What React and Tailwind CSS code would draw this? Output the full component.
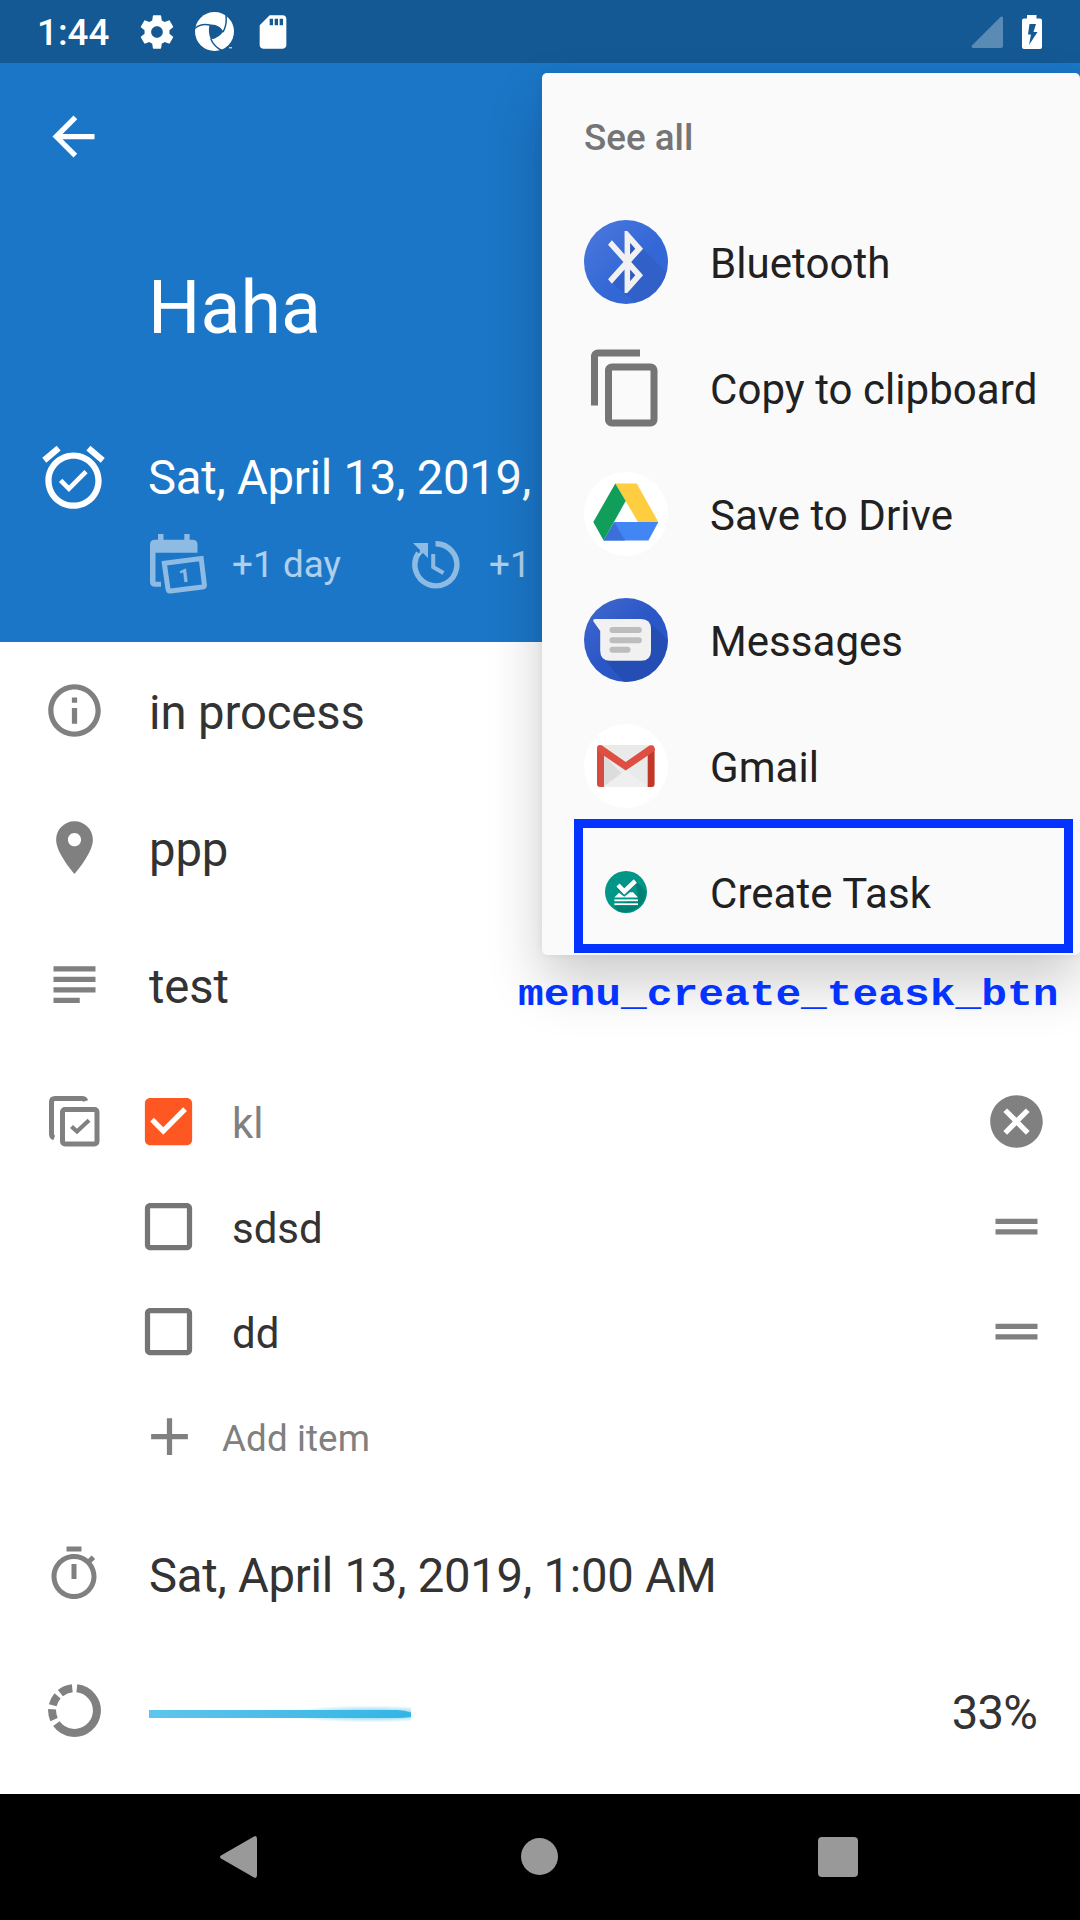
function Icon({ d, className }) {
  return (
    <svg viewBox="0 0 24 24" fill="currentColor" className={`shrink-0 ${className}`}>
      <path d={d} />
    </svg>
  );
}

const P = {
  back: "M20 11H7.83l5.59-5.59L12 4l-8 8 8 8 1.41-1.41L7.83 13H20v-2z",
  alarm:
    "M22 5.72l-4.6-3.86-1.29 1.53 4.6 3.86L22 5.72zM7.88 3.39L6.6 1.86 2 5.71l1.29 1.53 4.59-3.85zM12 4c-4.97 0-9 4.03-9 9s4.02 9 9 9c4.97 0 9-4.03 9-9s-4.03-9-9-9zm0 16c-3.87 0-7-3.13-7-7s3.13-7 7-7 7 3.13 7 7-3.13 7-7 7zm-1.46-5.47L8.41 12.4l-1.06 1.06 3.18 3.18 6-6-1.06-1.06-4.93 4.95z",
  gear: "M19.43 12.98c.04-.32.07-.64.07-.98s-.03-.66-.07-.98l2.11-1.65c.19-.15.24-.42.12-.64l-2-3.46c-.12-.22-.39-.3-.61-.22l-2.49 1c-.52-.4-1.08-.73-1.69-.98l-.38-2.65C14.46 2.18 14.25 2 14 2h-4c-.25 0-.46.18-.49.42l-.38 2.65c-.61.25-1.17.59-1.69.98l-2.49-1c-.23-.09-.49 0-.61.22l-2 3.46c-.13.22-.07.49.12.64l2.11 1.65c-.04.32-.07.65-.07.98s.03.66.07.98l-2.11 1.65c-.19.15-.24.42-.12.64l2 3.46c.12.22.39.3.61.22l2.49-1c.52.4 1.08.73 1.69.98l.38 2.65c.03.24.24.42.49.42h4c.25 0 .46-.18.49-.42l.38-2.65c.61-.25 1.17-.59 1.69-.98l2.49 1c.23.09.49 0 .61-.22l2-3.46c.12-.22.07-.49-.12-.64l-2.11-1.65zM12 15.5c-1.93 0-3.5-1.57-3.5-3.5s1.57-3.5 3.5-3.5 3.5 1.57 3.5 3.5-1.57 3.5-3.5 3.5z",
  sd: "M18 2h-8L4.02 8 4 20c0 1.1.9 2 2 2h12c1.1 0 2-.9 2-2V4c0-1.1-.9-2-2-2zm-6 6h-2V4h2v4zm3 0h-2V4h2v4zm3 0h-2V4h2v4z",
  info: "M11 7h2v2h-2zm0 4h2v6h-2zm1-9C6.48 2 2 6.48 2 12s4.48 10 10 10 10-4.48 10-10S17.52 2 12 2zm0 18c-4.41 0-8-3.59-8-8s3.59-8 8-8 8 3.59 8 8-3.59 8-8 8z",
  place:
    "M12 2C8.13 2 5 5.13 5 9c0 5.25 7 13 7 13s7-7.75 7-13c0-3.87-3.13-7-7-7zm0 9.5c-1.38 0-2.5-1.12-2.5-2.5s1.12-2.5 2.5-2.5 2.5 1.12 2.5 2.5-1.12 2.5-2.5 2.5z",
  subject: "M14 17H4v2h10v-2zm6-8H4v2h16V9zM4 15h16v-2H4v2zM4 5v2h16V5H4z",
  checked:
    "M19 3H5c-1.11 0-2 .9-2 2v14c0 1.1.89 2 2 2h14c1.11 0 2-.9 2-2V5c0-1.1-.89-2-2-2zm-9 14l-5-5 1.41-1.41L10 14.17l7.59-7.59L19 8l-9 9z",
  unchecked:
    "M19 5v14H5V5h14m0-2H5c-1.1 0-2 .9-2 2v14c0 1.1.9 2 2 2h14c1.1 0 2-.9 2-2V5c0-1.1-.9-2-2-2z",
  add: "M19 13h-6v6h-2v-6H5v-2h6V5h2v6h6v2z",
  cancel:
    "M12 2C6.47 2 2 6.47 2 12s4.47 10 10 10 10-4.47 10-10S17.53 2 12 2zm5 13.59L15.59 17 12 13.41 8.41 17 7 15.59 10.59 12 7 8.41 8.41 7 12 10.59 15.59 7 17 8.41 13.41 12 17 15.59z",
  drag: "M20 9H4v2h16V9zM4 15h16v-2H4v2z",
  timer:
    "M15 1H9v2h6V1zm-4 13h2V8h-2v6zm8.03-6.61l1.42-1.42c-.43-.51-.9-.99-1.41-1.41l-1.42 1.42C16.07 4.74 14.12 4 12 4c-4.97 0-9 4.03-9 9s4.02 9 9 9 9-4.03 9-9c0-2.12-.74-4.08-1.97-5.61zM12 20c-3.87 0-7-3.13-7-7s3.13-7 7-7 7 3.13 7 7-3.13 7-7 7z",
  copy: "M16 1H4c-1.1 0-2 .9-2 2v14h2V3h12V1zm3 4H8c-1.1 0-2 .9-2 2v14c0 1.1.9 2 2 2h11c1.1 0 2-.9 2-2V7c0-1.1-.9-2-2-2zm0 16H8V7h11v14z",
  bluetooth:
    "M17.71 7.71L12 2h-1v7.59L6.41 5 5 6.41 10.59 12 5 17.59 6.41 19 11 14.41V22h1l5.71-5.71-4.3-4.29 4.3-4.29zM13 5.83l1.88 1.88L13 9.59V5.83zm1.88 10.46L13 18.17v-3.76l1.88 1.88z",
};

function SwirlIcon() {
  return (
    <svg viewBox="0 0 39 39" className="ml-[18px] size-[39px] shrink-0">
      <circle cx="19.5" cy="19.5" r="19.5" fill="#fff" />
      <g stroke="#145994" fill="none" strokeWidth="1.5">
        <path d="M0 16.5C4 12.5 9 11.8 15 13" />
        <path d="M28 20C31 15 32 8 30.5 0" />
        <path d="M15.8 27C18 32 22 36.500 28 39" />
      </g>
      <path d="M31 0L39 0L39 12C37 8.500 34.500 6 32 4.500Z" fill="#145994" />
      <path
        d="M14.500 12.700C21 12 26 15 28.200 19.700C25 24 20 27 15.800 27.300C13.500 22 13.500 17 14.500 12.700Z"
        fill="#145994"
      />
      <path d="M34 35.800H37" stroke="#fff" />
    </svg>
  );
}

function StatusBar() {
  return (
    <div className="flex h-[63px] items-center bg-[#145994] pr-[38px] pl-[37px] text-white">
      <span className="w-[73px] pt-[4px] text-[36.75px] leading-none font-medium">1:44</span>
      <Icon d={P.gear} className="ml-[27px] size-10" />
      <SwirlIcon />
      <Icon d={P.sd} className="ml-[19px] size-10" />
      <svg viewBox="0 0 32 32" className="ml-auto size-8 shrink-0">
        <path d="M30 0.500Q32 0 32 2V30Q32 32 30 32H2Q0 31.500 1 29.500Z" fill="#fff" fillOpacity=".3" />
      </svg>
      <svg viewBox="0 0 20 34" className="ml-[19px] h-[34px] w-5 shrink-0">
        <path d="M5 0H14.500V3.500H18Q20 3.500 20 5.500V32Q20 34 18 34H2Q0 34 0 32V5.500Q0 3.500 2 3.500H5Z" fill="#fff" />
        <path d="M7.500 9H14L11.500 17H15.500L7 30L9 19.500H6Z" fill="#145994" />
      </svg>
    </div>
  );
}

function NextDayIcon() {
  return (
    <svg viewBox="0 0 58 60" className="h-[60px] w-[58px] shrink-0">
      <path
        d="M8 0H13.500V5.700H34.300V0H39.600V5.700H42.500Q47.500 5.700 47.500 10.700V18.700H5.500V47.700H11V52.700H5Q0 52.700 0 47.700V10.700Q0 5.700 5 5.700H8Z"
        fill="currentColor"
      />
      <path
        d="M14.300 29.300L51.200 24.500L54.400 51Q54.600 52.700 52.500 53L20.500 57Q18.300 57.200 18 55Z"
        fill="none"
        stroke="currentColor"
        strokeWidth="5"
      />
      <text
        x="34.500"
        y="48"
        textAnchor="middle"
        transform="rotate(-7 34.500 42)"
        className="fill-current font-['Roboto'] text-[19px] font-black"
      >
        1
      </text>
    </svg>
  );
}

function LaterIcon() {
  return (
    <svg viewBox="0 0 48 48" className="h-12 w-12 shrink-0">
      <path d="M23.500 2.800A21 21 0 1 1 6.500 12" fill="none" stroke="currentColor" strokeWidth="5.400" />
      <path d="M1 2H16V17L11 12L7 15L8 9Z" fill="currentColor" />
      <path d="M21.200 13V26L31.500 32" fill="none" stroke="currentColor" strokeWidth="4" />
    </svg>
  );
}

function Header() {
  return (
    <header className="flex h-[579px] flex-col bg-[#1b76c7] text-white">
      <div className="flex h-[147px] items-center pl-[42px]">
        <Icon d={P.back} className="size-[63px]" />
      </div>
      <h1 className="mt-[55px] pl-[148px] text-[73.5px] leading-[86px] font-normal">Haha</h1>
      <div className="mt-[75px] flex h-[100px] items-center pl-[36px]">
        <Icon d={P.alarm} className="mt-[2px] size-[75px]" />
        <span className="ml-[37px] pt-[5px] text-[47.25px] leading-none tracking-[-0.25px]">Sat, April 13, 2019,</span>
      </div>
      <div className="flex h-[76px] items-center pl-[150px] text-[36.75px] leading-none text-white/65">
        <span className="text-white/50">
          <NextDayIcon />
        </span>
        <span className="ml-[24px] pt-[3px] tracking-[0.1px]">+1 day</span>
        <span className="ml-[71px] pt-[2px] text-white/50">
          <LaterIcon />
        </span>
        <span className="ml-[29px] pt-[3px]">+1</span>
      </div>
    </header>
  );
}

function Row({ icon, children }) {
  return (
    <div className="flex h-[137px] items-center pl-[43px]">
      <div className="flex w-[63px] shrink-0 justify-center text-[#808080]">{icon}</div>
      <div className="ml-[43px] flex flex-1 items-center text-[47.25px] leading-none text-[#333]">{children}</div>
    </div>
  );
}

function ChecklistIcon() {
  return (
    <svg viewBox="0 0 51 51" fill="none" stroke="currentColor" strokeWidth="5" className="size-[51px]">
      <path d="M36.700 5Q36 2.500 33 2.500H6Q2.500 2.500 2.500 6V38Q2.500 41 5.200 42" />
      <rect x="13.500" y="13.500" width="34.500" height="34.500" rx="2.500" />
      <path d="M22.500 30.500L28 35.500L40 24.200" strokeWidth="4.200" />
    </svg>
  );
}

function ProgressIcon() {
  return (
    <svg viewBox="0 0 53 53" className="size-[53px]">
      <circle
        cx="26.500"
        cy="26.500"
        r="22.400"
        fill="none"
        stroke="currentColor"
        strokeWidth="8"
        pathLength="360"
        strokeDasharray="228 12 27 11 27 10 33 12"
        transform="rotate(-84 26.500 26.500)"
      />
    </svg>
  );
}

const items = [
  { label: "kl", done: true },
  { label: "sdsd", done: false },
  { label: "dd", done: false },
];

function Checklist() {
  return (
    <div className="flex py-4 pl-[43px]">
      <div className="flex h-[105px] w-[63px] items-center justify-center text-[#808080]">
        <ChecklistIcon />
      </div>
      <div className="flex-1 pr-8 pl-[31px]">
        {items.map((item) => (
          <div key={item.label} className="flex h-[105px] items-center">
            <Icon
              d={item.done ? P.checked : P.unchecked}
              className={item.done ? "mb-px size-[63px] text-[#ff5722]" : "mb-px size-[63px] text-[#757575]"}
            />
            <span
              className={
                item.done
                  ? "ml-[32px] flex-1 pt-[5px] text-[42px] leading-none text-[#808080]"
                  : "ml-[32px] flex-1 pt-[5px] text-[42px] leading-none text-[#333]"
              }
            >
              {item.label}
            </span>
            <Icon d={item.done ? P.cancel : P.drag} className="size-[63px] text-[#808080]" />
          </div>
        ))}
        <div className="flex h-[105px] items-center text-[#808080]">
          <Icon d={P.add} className="ml-px size-[63px]" />
          <span className="ml-[21px] pt-[5px] text-[36.75px] leading-none tracking-[0.1px]">Add item</span>
        </div>
      </div>
    </div>
  );
}

function ProgressBar() {
  return (
    <svg viewBox="0 0 262 24" className="mt-[6px] h-[24px] w-[262px]">
      <defs>
        <linearGradient id="bar">
          <stop offset="0" stopColor="#5fc5eb" />
          <stop offset="1" stopColor="#33b5e5" />
        </linearGradient>
        <radialGradient id="glow">
          <stop offset="0" stopColor="#33b5e5" stopOpacity=".8" />
          <stop offset="1" stopColor="#33b5e5" stopOpacity="0" />
        </radialGradient>
      </defs>
      <ellipse cx="222" cy="12" rx="90" ry="8.500" fill="url(#glow)" />
      <path d="M0 8H248Q256 8 262 10.500V15Q256 16 248 16H0Z" fill="url(#bar)" />
    </svg>
  );
}

function BluetoothIcon() {
  return (
    <svg viewBox="0 0 84 84" className="size-[84px]">
      <defs>
        <linearGradient id="bt" x1="0" y1="0" x2="1" y2="1">
          <stop offset="0" stopColor="#4b79dd" />
          <stop offset=".6" stopColor="#3367d6" />
        </linearGradient>
        <clipPath id="round">
          <circle cx="42" cy="42" r="42" />
        </clipPath>
      </defs>
      <circle cx="42" cy="42" r="42" fill="url(#bt)" />
      <path d="M58 28L90 60L60 90L25 60L41 44Z" fill="#2a4fa8" fillOpacity=".3" clipPath="url(#round)" />
      <path d="M44 20L58 28L44 42L58 56L44 67Z" fill="#2e5bbd" />
      <path d={P.bluetooth} fill="#f1f1f1" transform="translate(10.200 4.800) scale(2.760 3.100)" />
    </svg>
  );
}

function DriveIcon() {
  return (
    <svg viewBox="0 0 84 84" className="size-[84px]">
      <circle cx="42" cy="42" r="42" fill="#fff" />
      <path d="M31.300 11.500H52.700L74.400 50H54Z" fill="#ffcd40" />
      <path d="M30.300 50H74.400L64.400 68.500H19.600Z" fill="#4285f4" />
      <path d="M30.300 50L41 68.500H19.600Z" fill="#3b70d8" />
      <path d="M31.300 11.500L41.700 29L19.600 68.500L9.300 50Z" fill="#119e5a" />
    </svg>
  );
}

function MessagesIcon() {
  return (
    <svg viewBox="0 0 84 84" className="size-[84px]">
      <defs>
        <linearGradient id="msg" x1="0" y1="0" x2="1" y2="1">
          <stop offset="0" stopColor="#4269cf" />
          <stop offset=".5" stopColor="#2a56c6" />
        </linearGradient>
      </defs>
      <circle cx="42" cy="42" r="42" fill="url(#msg)" />
      <path d="M65 24L90 48L60 90H45L19 60Z" fill="#1f44a0" fillOpacity=".45" clipPath="url(#round)" />
      <path
        d="M11 21H57Q67 21 67 31V52.700Q67 62.700 57 62.700H26.200Q16.200 62.700 16.200 52.700V33L9.500 23.500Q8.500 21 11 21Z"
        fill="#f1f1f1"
      />
      <g fill="#bdbdbd">
        <rect x="25.500" y="29" width="32.300" height="6" rx="3" />
        <rect x="25.500" y="39.300" width="32.300" height="6" rx="3" />
        <rect x="25.500" y="48.800" width="21" height="6" rx="3" />
      </g>
    </svg>
  );
}

function GmailIcon() {
  return (
    <svg viewBox="0 0 84 84" className="size-[84px]">
      <circle cx="42" cy="42" r="42" fill="#fff" />
      <rect x="15" y="21" width="54" height="42" fill="#eaeaea" />
      <path d="M19 30L50 63H19Z" fill="#dcdcdc" />
      <path d="M19 63L41.700 46L64 63Z" fill="#efefef" />
      <path d="M13 24H20V63H16Q13 63 13 60Z" fill="#d64b3f" />
      <path d="M63.700 24H70.600V60Q70.600 63 67.600 63H63.700Z" fill="#c13828" />
      <path d="M13 24Q13 21 16 21L18 21.500L41.700 38L65.500 21.500Q70.600 20 70.600 25V27L41.700 46.500L13 27Z" fill="#de4e41" />
    </svg>
  );
}

function CreateTaskIcon() {
  return (
    <svg viewBox="0 0 42 42" className="size-[42px]">
      <circle cx="21" cy="21" r="21" fill="#009688" />
      <path d="M31 10L41 20A21 21 0 0 1 13 40L9 35L33 27Z" fill="#008174" />
      <g fill="#fff">
        <path d="M9.300 26.500L14 21.700L19.300 25.800L25 21.300H28L33 26.500Z" />
        <rect x="9.300" y="28.400" width="23.700" height="1.800" />
        <rect x="9.300" y="32.300" width="23.700" height="1.800" />
      </g>
      <path d="M13 14L19.300 20.500L30.300 10" fill="none" stroke="#008c80" strokeWidth="6.500" />
      <path d="M13 14L19.300 20.500L30.300 10" fill="none" stroke="#fff" strokeWidth="4.500" />
    </svg>
  );
}

const targets = [
  { label: "Bluetooth", icon: <BluetoothIcon /> },
  { label: "Copy to clipboard", icon: <Icon d={P.copy} className="size-[84px] text-[#757575]" /> },
  { label: "Save to Drive", icon: <DriveIcon /> },
  { label: "Messages", icon: <MessagesIcon /> },
  { label: "Gmail", icon: <GmailIcon /> },
  { label: "Create Task", icon: <CreateTaskIcon /> },
];

function ShareMenu() {
  return (
    <div className="absolute top-[73px] left-[542px] w-[538px] rounded-[5px] bg-[#fafafa] shadow-[0_28px_56px_rgba(0,0,0,0.2),0_0_10px_rgba(0,0,0,0.06)]">
      <div className="flex h-[126px] items-center pt-[4px] pl-[42px] text-[36.75px] leading-none font-medium text-[#757575]">
        See all
      </div>
      {targets.map((t) => (
        <div key={t.label} className="flex h-[126px] items-center pl-[42px]">
          <div className="flex w-[84px] shrink-0 justify-center">{t.icon}</div>
          <span className="ml-[42px] pt-[3px] text-[42px] leading-none tracking-[0.05px] whitespace-nowrap text-[#212121]">
            {t.label}
          </span>
        </div>
      ))}
      <div className="absolute top-[746px] left-[32px] h-[134px] w-[499px] border-[9px] border-[#0433ff]" />
      <div className="absolute top-[900px] left-[-24px] origin-top scale-y-[.88] font-['Liberation_Mono',monospace] text-[42.9px] leading-[50px] font-bold whitespace-nowrap text-[#0433ff]">
        menu_create_teask_btn
      </div>
    </div>
  );
}

function NavBar() {
  return (
    <nav className="flex h-[126px] items-center bg-black pl-[219px]">
      <svg viewBox="0 0 38 42" className="h-[42px] w-[38px]">
        <path d="M35 .5Q38 -1 38 3V39Q38 43 35 41.500L2 22.500Q0 21 2 19.500Z" fill="#999" />
      </svg>
      <div className="mb-px ml-[264px] size-[37px] rounded-full bg-[#999]" />
      <div className="ml-[260px] size-10 rounded-[4px] bg-[#999]" />
    </nav>
  );
}

export default function App() {
  return (
    <div className="relative flex h-[1920px] w-[1080px] flex-col overflow-hidden bg-white font-['Roboto',sans-serif]">
      <StatusBar />
      <Header />
      <main className="flex-1">
        <Row icon={<Icon d={P.info} className="size-[63px]" />}>
          <span className="pt-[6px] tracking-[-0.1px]">in process</span>
        </Row>
        <Row icon={<Icon d={P.place} className="size-[63px]" />}>
          <span className="pt-[6px] tracking-[-0.1px]">ppp</span>
        </Row>
        <Row icon={<Icon d={P.subject} className="size-[63px]" />}>
          <span className="pt-[7px] tracking-[-0.1px]">test</span>
        </Row>
        <Checklist />
        <Row icon={<Icon d={P.timer} className="mt-px mr-[2px] size-[60px]" />}>
          <span className="pt-[6px] tracking-[-0.25px]">Sat, April 13, 2019, 1:00 AM</span>
        </Row>
        <Row icon={<ProgressIcon />}>
          <ProgressBar />
          <span className="mr-[43px] ml-auto pt-[6px] tracking-[-0.8px]">33%</span>
        </Row>
      </main>
      <NavBar />
      <ShareMenu />
    </div>
  );
}
